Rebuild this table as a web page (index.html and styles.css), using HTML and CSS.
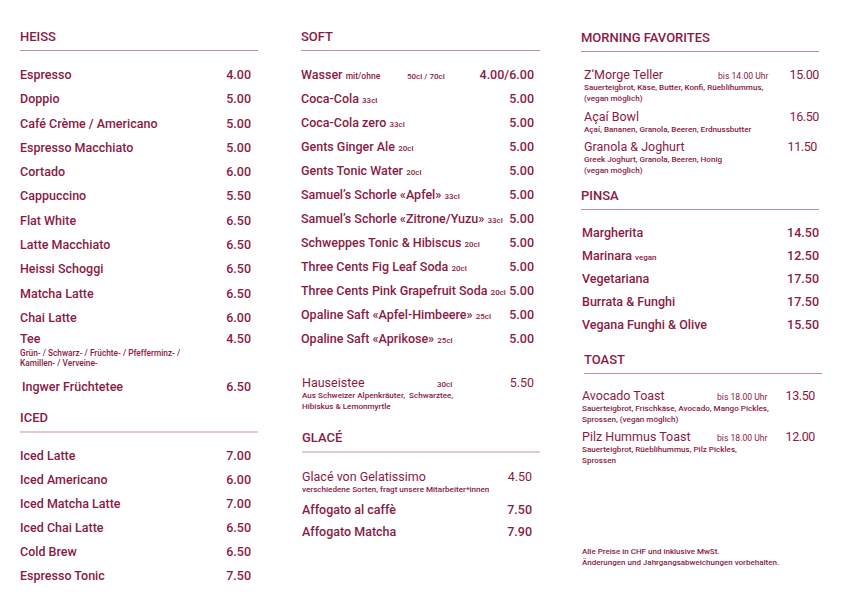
FILE: index.html
```html
<!DOCTYPE html>
<html lang="de">
<head>
<meta charset="utf-8">
<title>Karte</title>
<link rel="stylesheet" href="styles.css">
</head>
<body>
<div class="menu">
  <div class="col col-1">
    <section class="sec">
      <h2 class="head">HEISS</h2>
      <ul class="list list-heiss">
        <li class="row"><span class="name">Espresso</span><span class="price">4.00</span></li>
        <li class="row"><span class="name">Doppio</span><span class="price">5.00</span></li>
        <li class="row"><span class="name">Café Crème / Americano</span><span class="price">5.00</span></li>
        <li class="row"><span class="name">Espresso Macchiato</span><span class="price">5.00</span></li>
        <li class="row"><span class="name">Cortado</span><span class="price">6.00</span></li>
        <li class="row"><span class="name">Cappuccino</span><span class="price">5.50</span></li>
        <li class="row"><span class="name">Flat White</span><span class="price">6.50</span></li>
        <li class="row"><span class="name">Latte Macchiato</span><span class="price">6.50</span></li>
        <li class="row"><span class="name">Heissi Schoggi</span><span class="price">6.50</span></li>
        <li class="row"><span class="name">Matcha Latte</span><span class="price">6.50</span></li>
        <li class="row"><span class="name">Chai Latte</span><span class="price">6.00</span></li>
      </ul>
      <div class="item item-tee">
        <div class="row row-tee"><span class="name">Tee</span><span class="price">4.50</span></div>
        <p class="desc desc-tee">Grün- / Schwarz- / Früchte- / Pfefferminz- /<br>Kamillen- / Verveine-</p>
      </div>
      <div class="row row-ingwer"><span class="name">Ingwer Früchtetee</span><span class="price">6.50</span></div>
    </section>
    <section class="sec sec-iced">
      <h2 class="head head-light">ICED</h2>
      <ul class="list list-iced">
        <li class="row"><span class="name">Iced Latte</span><span class="price">7.00</span></li>
        <li class="row"><span class="name">Iced Americano</span><span class="price">6.00</span></li>
        <li class="row"><span class="name">Iced Matcha Latte</span><span class="price">7.00</span></li>
        <li class="row"><span class="name">Iced Chai Latte</span><span class="price">6.50</span></li>
        <li class="row"><span class="name">Cold Brew</span><span class="price">6.50</span></li>
        <li class="row"><span class="name">Espresso Tonic</span><span class="price">7.50</span></li>
      </ul>
    </section>
  </div>

  <div class="col col-2">
    <section class="sec">
      <h2 class="head">SOFT</h2>
      <ul class="list list-soft">
        <li class="row row-meta meta-wasser"><span class="name">Wasser <span class="note">mit/ohne</span></span><span class="meta">50cl / 70cl</span><span class="price">4.00/6.00</span></li>
        <li class="row"><span class="name">Coca-Cola <span class="vol">33cl</span></span><span class="price">5.00</span></li>
        <li class="row"><span class="name">Coca-Cola zero <span class="vol">33cl</span></span><span class="price">5.00</span></li>
        <li class="row"><span class="name">Gents Ginger Ale <span class="vol">20cl</span></span><span class="price">5.00</span></li>
        <li class="row"><span class="name">Gents Tonic Water <span class="vol">20cl</span></span><span class="price">5.00</span></li>
        <li class="row"><span class="name">Samuel’s Schorle «Apfel» <span class="vol">33cl</span></span><span class="price">5.00</span></li>
        <li class="row"><span class="name">Samuel’s Schorle «Zitrone/Yuzu» <span class="vol">33cl</span></span><span class="price">5.00</span></li>
        <li class="row"><span class="name">Schweppes Tonic &amp; Hibiscus <span class="vol">20cl</span></span><span class="price">5.00</span></li>
        <li class="row"><span class="name">Three Cents Fig Leaf Soda <span class="vol">20cl</span></span><span class="price">5.00</span></li>
        <li class="row"><span class="name">Three Cents Pink Grapefruit Soda <span class="vol">20cl</span></span><span class="price">5.00</span></li>
        <li class="row"><span class="name">Opaline Saft «Apfel-Himbeere» <span class="vol">25cl</span></span><span class="price">5.00</span></li>
        <li class="row"><span class="name">Opaline Saft «Aprikose» <span class="vol">25cl</span></span><span class="price">5.00</span></li>
      </ul>
      <div class="item item-haus">
        <div class="row row-dish row-meta meta-haus"><span class="name">Hauseistee</span><span class="meta">30cl</span><span class="price">5.50</span></div>
        <p class="desc">Aus Schweizer Alpenkräuter,&nbsp; Schwarztee,<br>Hibiskus &amp; Lemonmyrtle</p>
      </div>
    </section>
    <section class="sec sec-glace">
      <h2 class="head head-light">GLACÉ</h2>
      <div class="item item-gelato">
        <div class="row row-dish"><span class="name">Glacé von Gelatissimo</span><span class="price">4.50</span></div>
        <p class="desc">verschiedene Sorten, fragt unsere Mitarbeiter*innen</p>
      </div>
      <ul class="list list-glace">
        <li class="row"><span class="name">Affogato al caffè</span><span class="price">7.50</span></li>
        <li class="row"><span class="name">Affogato Matcha</span><span class="price">7.90</span></li>
      </ul>
    </section>
  </div>

  <div class="col col-3">
    <section class="sec sec-morning">
      <h2 class="head">MORNING FAVORITES</h2>
      <div class="item item-morge">
        <div class="row row-dish row-meta meta-time"><span class="name">Z‘Morge Teller</span><span class="meta time">bis 14.00 Uhr</span><span class="price price-big">15.00</span></div>
        <p class="desc">Sauerteigbrot, Käse, Butter, Konfi, Rüeblihummus,<br>(vegan möglich)</p>
      </div>
      <div class="item item-acai">
        <div class="row row-dish"><span class="name">Açaí Bowl</span><span class="price price-big">16.50</span></div>
        <p class="desc">Açaí, Bananen, Granola, Beeren, Erdnussbutter</p>
      </div>
      <div class="item item-granola">
        <div class="row row-dish"><span class="name">Granola &amp; Joghurt</span><span class="price price-big price-narrow">11.50</span></div>
        <p class="desc">Greek Joghurt, Granola, Beeren, Honig<br>(vegan möglich)</p>
      </div>
    </section>
    <section class="sec sec-pinsa">
      <h2 class="head">PINSA</h2>
      <ul class="list list-pinsa">
        <li class="row"><span class="name">Margherita</span><span class="price">14.50</span></li>
        <li class="row"><span class="name">Marinara <span class="vol">vegan</span></span><span class="price">12.50</span></li>
        <li class="row"><span class="name">Vegetariana</span><span class="price">17.50</span></li>
        <li class="row"><span class="name">Burrata &amp; Funghi</span><span class="price">17.50</span></li>
        <li class="row"><span class="name">Vegana Funghi &amp; Olive</span><span class="price">15.50</span></li>
      </ul>
    </section>
    <section class="sec sec-toast">
      <h2 class="head head-toast">TOAST</h2>
      <div class="item item-avocado">
        <div class="row row-dish row-meta meta-time2"><span class="name">Avocado Toast</span><span class="meta time">bis 18.00 Uhr</span><span class="price price-big price-toast">13.50</span></div>
        <p class="desc">Sauerteigbrot, Frischkäse, Avocado, Mango Pickles,<br>Sprossen, (vegan möglich)</p>
      </div>
      <div class="item item-pilz">
        <div class="row row-dish row-meta meta-time2"><span class="name">Pilz Hummus Toast</span><span class="meta time">bis 18.00 Uhr</span><span class="price price-big price-toast">12.00</span></div>
        <p class="desc">Sauerteigbrot, Rüeblihummus, Pilz Pickles,<br>Sprossen</p>
      </div>
    </section>
    <p class="footer">Alle Preise in CHF und inklusive MwSt.<br>Änderungen und Jahrgangsabweichungen vorbehalten.</p>
  </div>
</div>
</body>
</html>
```

FILE: styles.css
```css
html, body {
  margin: 0;
  padding: 0;
  background: #ffffff;
}

body {
  color: #8a1a44;
  font-family: Roboto, "Liberation Sans", sans-serif;
  -webkit-font-smoothing: antialiased;
}

.menu {
  display: flex;
  width: 842px;
  height: 596px;
  padding-left: 20px;
  box-sizing: border-box;
  overflow: hidden;
}

.col {
  display: flex;
  flex-direction: column;
  flex: none;
}

.col-1 {
  width: 238px;
  padding-top: 29px;
}

.col-2 {
  width: 239px;
  margin-left: 43px;
  padding-top: 29px;
}

.col-3 {
  width: 238px;
  margin-left: 41px;
  padding-top: 30px;
}

.sec {
  margin: 0;
}

.head {
  margin: 0;
  font-size: 13px;
  font-weight: 500;
  line-height: 16px;
  padding-bottom: 5px;
  border-bottom: 1px solid #c98aa0;
}

.head-light {
  border-bottom: 2px solid #e6c8d3;
}

.list {
  list-style: none;
  margin: 12px 0 0;
  padding: 0;
}

.row {
  display: flex;
  justify-content: space-between;
  align-items: baseline;
  height: 24px;
  line-height: 24px;
  font-size: 12.5px;
  font-weight: 500;
  white-space: nowrap;
}

.row-meta {
  display: grid;
  align-items: baseline;
}

.meta-wasser {
  grid-template-columns: 106px 1fr auto;
}

.meta-haus {
  grid-template-columns: 135px 1fr auto;
}

.meta-time {
  grid-template-columns: 134px 1fr auto;
}

.meta-time2 {
  grid-template-columns: 135px 1fr auto;
}

.meta {
  font-size: 8px;
  font-weight: 500;
}

.time {
  font-size: 8.6px;
  font-weight: 400;
}

.price {
  text-align: right;
}

.price-big {
  letter-spacing: -0.4px;
}

.col-1 .price {
  padding-right: 7px;
}

.col-2 .price {
  padding-right: 6px;
}

.col-2 .sec-glace .price {
  padding-right: 8px;
}

.vol {
  font-size: 8px;
  font-weight: 500;
}

.note {
  font-size: 8.5px;
  font-weight: 500;
}

.desc {
  margin: 0;
  font-size: 8.1px;
  font-weight: 500;
  line-height: 11px;
  white-space: nowrap;
}

/* HEISS */
.list-heiss .row {
  height: 24.3px;
  line-height: 24.3px;
}

.row-tee {
  height: 18px;
  line-height: 18px;
}

.desc-tee {
  font-size: 8.3px;
  line-height: 10px;
}

.row-ingwer {
  margin-top: 7px;
  padding-left: 2px;
}

/* ICED */
.sec-iced {
  margin-top: 11px;
}

.list-iced {
  margin-top: 11px;
}

/* dish rows (name + description) */
.row-dish {
  height: 14px;
  line-height: 14px;
  font-weight: 400;
}

/* SOFT */
.item-haus {
  margin-top: 25px;
  padding-left: 1px;
}

/* GLACÉ */
.sec-glace {
  margin-top: 18px;
  padding-left: 1px;
}

.item-gelato {
  margin-top: 17px;
}

.list-glace {
  margin-top: 4px;
}

.list-glace .row {
  height: 22px;
  line-height: 22px;
}

/* MORNING */
.item-morge {
  margin-top: 16px;
  padding-left: 3px;
}

.item-acai {
  margin-top: 6px;
  padding-left: 3px;
}

.item-granola {
  margin-top: 5px;
  padding-left: 3px;
}

.price-narrow {
  padding-right: 2px;
}

/* PINSA */
.sec-pinsa {
  margin-top: 12px;
}

.list-pinsa {
  margin-top: 11px;
  padding-left: 1px;
}

.list-pinsa .row {
  height: 23px;
  line-height: 23px;
}

/* TOAST */
.sec-toast {
  margin-top: 16px;
}

.head-toast {
  margin-left: 3px;
  margin-right: -3px;
}

.item-avocado {
  margin-top: 15px;
  padding-left: 1px;
}

.item-pilz {
  margin-top: 5px;
  padding-left: 1px;
}

.price-toast {
  padding-right: 4px;
}

.footer {
  margin: 80px 0 0;
  padding-left: 1px;
  font-size: 8px;
  font-weight: 500;
  line-height: 11px;
  white-space: nowrap;
}
```
